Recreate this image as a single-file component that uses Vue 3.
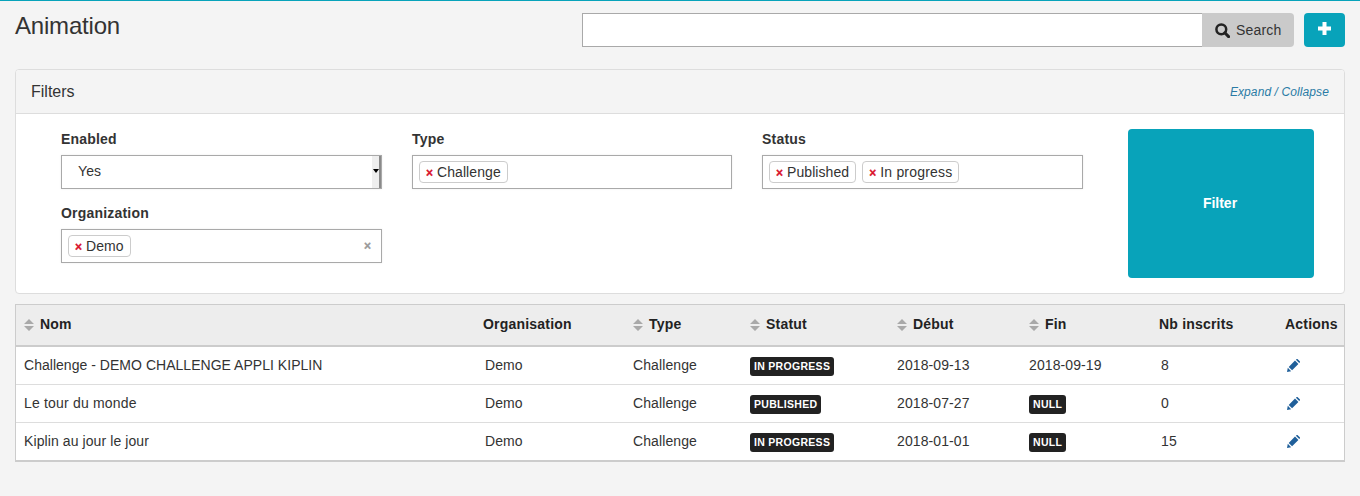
<script setup>
const rows = [
  { nom: 'Challenge - DEMO CHALLENGE APPLI KIPLIN', org: 'Demo', type: 'Challenge', statut: 'IN PROGRESS', debut: '2018-09-13', fin: '2018-09-19', finBadge: false, nb: '8' },
  { nom: 'Le tour du monde', org: 'Demo', type: 'Challenge', statut: 'PUBLISHED', debut: '2018-07-27', fin: 'NULL', finBadge: true, nb: '0' },
  { nom: 'Kiplin au jour le jour', org: 'Demo', type: 'Challenge', statut: 'IN PROGRESS', debut: '2018-01-01', fin: 'NULL', finBadge: true, nb: '15' },
]
const heads = [
  { t: 'Nom', sort: true, w: 459 },
  { t: 'Organisation', sort: false, w: 150 },
  { t: 'Type', sort: true, w: 117 },
  { t: 'Statut', sort: true, w: 147 },
  { t: 'Début', sort: true, w: 132 },
  { t: 'Fin', sort: true, w: 130 },
  { t: 'Nb inscrits', sort: false, w: 126 },
  { t: 'Actions', sort: false, w: 67 },
]
</script>

<template>
  <div class="page">
    <header class="top">
      <h1>Animation</h1>
      <div class="tools">
        <div class="search">
          <div class="search-input"></div>
          <button class="search-btn">
            <svg width="15" height="15" viewBox="0 0 15 15"><circle cx="6.300" cy="6.300" r="4.900" fill="none" stroke="#222" stroke-width="2.500"/><path d="M9.800 9.800 13.600 13.600" stroke="#222" stroke-width="3" stroke-linecap="round"/></svg>
            <span>Search</span>
          </button>
        </div>
        <button class="add">
          <svg width="13" height="13" viewBox="0 0 13 13"><path d="M6.500 0v13M0 6.500h13" stroke="#fff" stroke-width="4"/></svg>
        </button>
      </div>
    </header>

    <section class="panel">
      <div class="panel-head">
        <span>Filters</span>
        <a class="expand">Expand / Collapse</a>
      </div>
      <div class="panel-body">
        <div class="fields">
          <div class="field">
            <label>Enabled</label>
            <div class="box select">
              <span class="yes">Yes</span>
              <span class="spin"><i></i></span>
            </div>
          </div>
          <div class="field">
            <label>Type</label>
            <div class="box"><span class="tag"><b>×</b>Challenge</span></div>
          </div>
          <div class="field">
            <label>Status</label>
            <div class="box">
              <span class="tag"><b>×</b>Published</span>
              <span class="tag"><b>×</b>In progress</span>
            </div>
          </div>
          <div class="field">
            <label>Organization</label>
            <div class="box">
              <span class="tag"><b>×</b>Demo</span>
              <span class="clear">×</span>
            </div>
          </div>
        </div>
        <button class="filter">Filter</button>
      </div>
    </section>

    <table class="grid">
      <colgroup>
        <col v-for="h in heads" :key="h.t" :style="{ width: h.w + 'px' }" />
      </colgroup>
      <thead>
        <tr>
          <th v-for="h in heads" :key="h.t">
            <svg v-if="h.sort" class="sort" width="10" height="12" viewBox="0 0 10 12"><path d="M5 0 10 5H0zM0 7h10L5 12z" fill="#a9a9a9"/></svg>{{ h.t }}
          </th>
        </tr>
      </thead>
      <tbody>
        <tr v-for="r in rows" :key="r.nom">
          <td>{{ r.nom }}</td>
          <td class="pad">{{ r.org }}</td>
          <td>{{ r.type }}</td>
          <td><span class="badge">{{ r.statut }}</span></td>
          <td>{{ r.debut }}</td>
          <td><span v-if="r.finBadge" class="badge">{{ r.fin }}</span><template v-else>{{ r.fin }}</template></td>
          <td class="pad">{{ r.nb }}</td>
          <td class="pad">
            <svg class="pen" width="13" height="13" viewBox="0 0 13 13"><path d="M0 13 .8 8.800 4.200 12.200zM1.700 7.900 8 1.600 11.400 5 5.100 11.300zM8.900.7 9.500.2c.4-.3.900-.3 1.200 0l2.100 2.100c.3.300.3.800 0 1.200l-.6.600z" fill="#1f5f9a"/></svg>
          </td>
        </tr>
      </tbody>
    </table>
  </div>
</template>

<style>
html, body { margin: 0; background: #f4f4f4; }
</style>

<style scoped>
.page {
  box-sizing: border-box;
  height: 496px;
  padding: 0 15px;
  background: #f4f4f4;
  border-top: 1px solid #08a3ba;
  font-family: "Liberation Sans", Arial, sans-serif;
  font-size: 14px;
  color: #333;
  overflow: hidden;
}
.top {
  display: flex;
  justify-content: space-between;
  align-items: flex-start;
  height: 68px;
}
h1 {
  margin: 10px 0 0;
  font-size: 24px;
  font-weight: 400;
  line-height: 30px;
  letter-spacing: -.2px;
}
.tools { display: flex; gap: 10px; margin-top: 12px; }
.search { display: flex; width: 712px; height: 34px; }
.search-input {
  flex: 1;
  box-sizing: border-box;
  background: #fff;
  border: 1px solid #a9a9a9;
  border-right: 0;
}
.search-btn {
  display: flex;
  align-items: center;
  gap: 6px;
  width: 92px;
  padding: 0 0 0 13px;
  border: 0;
  border-radius: 0 4px 4px 0;
  background: #cacaca;
  color: #333;
  font: 14px "Liberation Sans", Arial, sans-serif;
  letter-spacing: .2px;
}
.add {
  display: flex;
  align-items: center;
  justify-content: center;
  width: 41px;
  height: 34px;
  padding: 0 0 3px;
  border: 0;
  border-radius: 4px;
  background: #08a3ba;
}
.panel {
  box-sizing: border-box;
  height: 225px;
  background: #fff;
  border: 1px solid #ddd;
  border-radius: 4px;
  overflow: hidden;
}
.panel-head {
  box-sizing: border-box;
  display: flex;
  justify-content: space-between;
  align-items: center;
  height: 44px;
  padding: 0 15px;
  background: #f4f4f4;
  border-bottom: 1px solid #ddd;
  color: #333;
  font-size: 16px;
}
.expand {
  font-size: 12px;
  font-style: italic;
  color: #2a7ba5;
  letter-spacing: .1px;
}
.panel-body { display: flex; padding: 15px 30px 0 45px; }
.fields {
  display: grid;
  grid-template-columns: 321px 320px 321px;
  column-gap: 30px;
  row-gap: 14px;
  align-content: start;
  flex: none;
  width: 1022px;
}
.field label {
  display: block;
  margin: 1px 0 6px;
  font-weight: 700;
  line-height: 19px;
  letter-spacing: .2px;
}
.box {
  box-sizing: border-box;
  position: relative;
  display: flex;
  align-items: center;
  gap: 6px;
  height: 34px;
  padding: 0 6px;
  background: #fff;
  border: 1px solid #a9a9a9;
  box-shadow: 0 0 2px rgba(0,0,0,.08);
}
.select { padding: 0 0 2px 16px; }
.yes { color: #333; letter-spacing: .1px; }
.spin {
  position: absolute;
  top: 0;
  right: 0;
  width: 9px;
  height: 32px;
  background: #eee;
  border-right: 2px solid #8a8a8a;
  box-sizing: border-box;
}
.spin i {
  position: absolute;
  left: 1px;
  top: 13px;
  border-left: 3px solid transparent;
  border-right: 3px solid transparent;
  border-top: 4px solid #000;
}
.tag {
  box-sizing: border-box;
  display: inline-flex;
  align-items: center;
  height: 22px;
  padding: 0 6px 1px;
  background: #fff;
  border: 1px solid #ccc;
  border-radius: 4px;
  color: #333;
  line-height: 20px;
  letter-spacing: .08px;
}
.tag + .tag { letter-spacing: .2px; }
.tag b {
  margin-right: 4px;
  color: #d9112b;
  font-size: 12px;
  font-weight: 700;
  width: 7px;
  padding-top: 2px;
  -webkit-text-stroke: .3px #d9112b;
}
.clear {
  position: absolute;
  right: 10px;
  top: 6px;
  color: #999;
  font-size: 12px;
  font-weight: 700;
  line-height: 20px;
  -webkit-text-stroke: .3px #999;
}
.filter {
  width: 186px;
  height: 149px;
  margin-left: 45px;
  flex: none;
  padding: 0 2px 2px 0;
  border: 0;
  border-radius: 4px;
  background: #08a3ba;
  color: #fff;
  font: 700 14px "Liberation Sans", Arial, sans-serif;
}
.grid {
  width: 1330px;
  margin-top: 10px;
  table-layout: fixed;
  border-collapse: separate;
  border-spacing: 0;
  background: #fff;
  border: 1px solid #ccc;
  border-bottom-width: 2px;
}
th {
  box-sizing: border-box;
  height: 42px;
  padding: 0 0 2px 8px;
  background: #ededed;
  border-bottom: 2px solid #ccc;
  color: #222;
  font-weight: 700;
  text-align: left;
  white-space: nowrap;
  letter-spacing: .2px;
}
.sort { margin-right: 6px; vertical-align: -1.500px; }
td {
  box-sizing: border-box;
  height: 38px;
  padding: 0 0 2px 8px;
  border-bottom: 1px solid #ddd;
  color: #333;
  white-space: nowrap;
  letter-spacing: .1px;
}
tbody tr:nth-child(1) td:first-child { letter-spacing: .03px; }
tbody tr:nth-child(2) td:first-child { letter-spacing: .18px; }
tbody tr:nth-child(3) td:first-child { letter-spacing: .09px; }
tbody tr:last-child td { border-bottom: 0; height: 37px; }
td.pad { padding-left: 10px; }
.badge {
  display: inline-block;
  position: relative;
  top: 2px;
  padding: 0 4px;
  height: 19px;
  line-height: 19px;
  border-radius: 3px;
  background: #222;
  color: #fff;
  font-size: 10.500px;
  font-weight: 700;
  letter-spacing: .3px;
  vertical-align: middle;
}
.pen { display: block; position: relative; top: 1px; }
</style>
